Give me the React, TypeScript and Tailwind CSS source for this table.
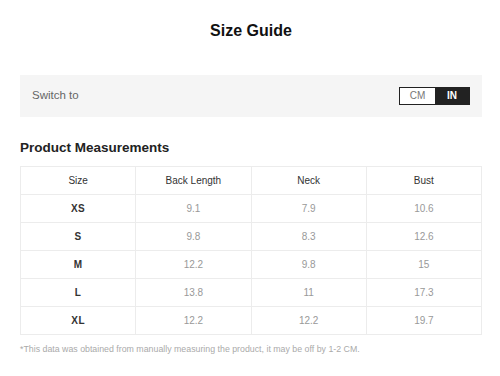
const rows = [
  { size: 'XS', back: '9.1', neck: '7.9', bust: '10.6' },
  { size: 'S', back: '9.8', neck: '8.3', bust: '12.6' },
  { size: 'M', back: '12.2', neck: '9.8', bust: '15' },
  { size: 'L', back: '13.8', neck: '11', bust: '17.3' },
  { size: 'XL', back: '12.2', neck: '12.2', bust: '19.7' },
]

export default function App() {
  return (
    <div
      className="w-[500px] h-[376px] bg-white pl-5 pr-[18px] overflow-hidden"
      style={{ fontFamily: '"Liberation Sans", Arial, sans-serif' }}
    >
      <h1 className="pt-[22px] text-center text-[16px] font-bold text-[#111] leading-[18px]">Size Guide</h1>

      <div className="mt-[35px] h-[42px] bg-[#f5f5f5] flex items-center justify-between pl-3 pr-3">
        <span className="text-[11.5px] text-[#666]">Switch to</span>
        <div className="flex h-[18px] border border-[#222]">
          <button className="w-[35px] bg-white text-[10px] text-[#777] leading-none">CM</button>
          <button className="w-[34px] bg-[#222] text-[10px] font-bold text-white leading-none">IN</button>
        </div>
      </div>

      <h2 className="mt-[22px] text-[13.5px] font-bold text-[#222] leading-[17px]">Product Measurements</h2>

      <table className="mt-[10px] w-full table-fixed border-collapse border border-[#ececec] text-[10px]">
        <thead>
          <tr className="h-[28px]">
            {['Size', 'Back Length', 'Neck', 'Bust'].map((h) => (
              <th key={h} className="border border-[#ececec] font-normal text-[#333]">{h}</th>
            ))}
          </tr>
        </thead>
        <tbody>
          {rows.map((r) => (
            <tr key={r.size} className="h-[28px] text-center">
              <td className="border border-[#ececec] font-bold text-[#333] tracking-[0.5px]">{r.size}</td>
              <td className="border border-[#ececec] text-[#999]">{r.back}</td>
              <td className="border border-[#ececec] text-[#999]">{r.neck}</td>
              <td className="border border-[#ececec] text-[#999]">{r.bust}</td>
            </tr>
          ))}
        </tbody>
      </table>

      <p className="mt-[8px] text-[8.8px] text-[#aaa]">
        *This data was obtained from manually measuring the product, it may be off by 1-2 CM.
      </p>
    </div>
  )
}
